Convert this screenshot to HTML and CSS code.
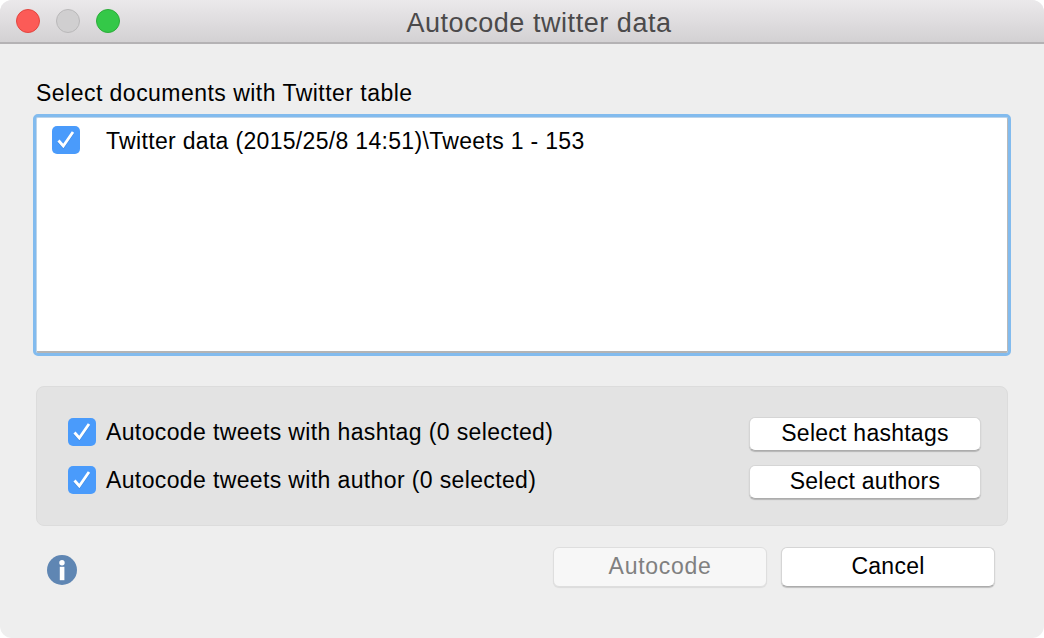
FILE: index.html
```html
<!DOCTYPE html>
<html lang="en">
<head>
<meta charset="utf-8">
<title>Autocode twitter data</title>
<link rel="stylesheet" href="styles.css">
</head>
<body>
<div class="window">
  <header class="titlebar">
    <div class="lights">
      <span class="light red"></span>
      <span class="light gray"></span>
      <span class="light green"></span>
    </div>
    <div class="title">Autocode twitter data</div>
  </header>
  <main class="content">
    <div class="list-label">Select documents with Twitter table</div>
    <div class="list">
      <div class="list-row">
        <span class="check"><svg viewBox="0 0 28 28" width="28" height="28"><path class="tick-shadow" d="M6.5 15.5 L11.3 21 L21 7"/><path class="tick" d="M6.5 14.5 L11.3 20 L21 6"/></svg></span>
        <span class="row-text">Twitter data (2015/25/8 14:51)\Tweets 1 - 153</span>
      </div>
    </div>
    <section class="options">
      <div class="option">
        <label class="option-label">
          <span class="check"><svg viewBox="0 0 28 28" width="28" height="28"><path class="tick-shadow" d="M6.5 15.5 L11.3 21 L21 7"/><path class="tick" d="M6.5 14.5 L11.3 20 L21 6"/></svg></span>
          <span>Autocode tweets with hashtag (0 selected)</span>
        </label>
        <button class="btn small">Select hashtags</button>
      </div>
      <div class="option">
        <label class="option-label">
          <span class="check"><svg viewBox="0 0 28 28" width="28" height="28"><path class="tick-shadow" d="M6.5 15.5 L11.3 21 L21 7"/><path class="tick" d="M6.5 14.5 L11.3 20 L21 6"/></svg></span>
          <span>Autocode tweets with author (0 selected)</span>
        </label>
        <button class="btn small">Select authors</button>
      </div>
    </section>
    <footer class="footer">
      <svg class="info" viewBox="0 0 30 30" width="30" height="30"><circle cx="15" cy="15" r="15" fill="#5f86b3"/><circle cx="15" cy="7.8" r="2.7" fill="#fff"/><rect x="12.8" y="11.8" width="4.6" height="13.4" fill="#fff"/></svg>
      <div class="actions">
        <button class="btn large disabled">Autocode</button>
        <button class="btn large">Cancel</button>
      </div>
    </footer>
  </main>
</div>
</body>
</html>
```
FILE: styles.css
```css
* { box-sizing: border-box; }
html, body { margin: 0; padding: 0; background: #fff; }
body {
  width: 1044px;
  height: 638px;
  overflow: hidden;
  font-family: "Liberation Sans", Arial, sans-serif;
  font-size: 23px;
  color: #000;
}
.window {
  width: 1044px;
  height: 638px;
  border-radius: 12px;
  background: #eeeeee;
  overflow: hidden;
  display: flex;
  flex-direction: column;
}
.titlebar {
  height: 44px;
  flex: none;
  display: flex;
  align-items: center;
  padding-left: 16px;
  background: linear-gradient(#ebe9eb, #d3d1d3);
  border-bottom: 2px solid #b4b2b4;
}
.lights { display: flex; gap: 16px; }
.light {
  width: 24px;
  height: 24px;
  border-radius: 50%;
  border: 1px solid transparent;
}
.red { background: #fc5b57; border-color: #e2463f; }
.gray { background: #d0cfd0; border-color: #b9b8b9; }
.green { background: #34c848; border-color: #2cac3a; }
.title {
  flex: 1;
  padding: 3px 86px 0 0;
  text-align: center;
  font-size: 27px;
  line-height: 36px;
  color: #4b4a4b;
  letter-spacing: 0.55px;
}
.content {
  flex: 1;
  padding: 35px 36px 0;
  display: flex;
  flex-direction: column;
}
.list-label { height: 26px; line-height: 28px; letter-spacing: 0.47px; }
.list {
  width: 972px;
  height: 236px;
  margin-top: 12px;
  background: #fff;
  outline: 3px solid #82bbee;
  border: 1px solid #bcd4ea;
  border-right-color: #b9b9b9;
  border-bottom: 2px solid #b4b4b4;
  border-radius: 2px;
  padding: 8px 15px;
}
.list-row { display: flex; align-items: center; gap: 26px; height: 28px; }
.row-text { letter-spacing: 0.32px; padding-top: 2px; }
.check {
  width: 28px;
  height: 28px;
  flex: none;
  border-radius: 5px;
  background: #4a9bfb;
  display: block;
}
.check svg { display: block; }
.tick { fill: none; stroke: #fff; stroke-width: 2.8; }
.tick-shadow { fill: none; stroke: #3579c9; stroke-width: 2.8; opacity: 0.5; }
.options {
  margin-top: 33px;
  height: 140px;
  width: 972px;
  background: #e3e3e3;
  border: 1px solid #dcdcdc;
  border-radius: 8px;
  padding: 30px 26px 0 31px;
  display: flex;
  flex-direction: column;
  gap: 14px;
}
.option { display: flex; align-items: center; justify-content: space-between; height: 34px; }
.option-label { display: flex; align-items: center; gap: 10px; letter-spacing: 0.37px; line-height: 24px; margin-bottom: 4px; }
.btn {
  font: inherit;
  color: #000;
  background: #fff;
  border: 1px solid #d5d5d5;
  border-bottom-color: #acacac;
  border-radius: 6px;
  box-shadow: 0 1px 1px rgba(0,0,0,.2);
  padding: 0 0 2px;
  letter-spacing: 0.25px;
}
.small { width: 232px; height: 34px; }
.large { width: 214px; height: 40px; }
.disabled { background: #f7f7f7; color: #808080; border-color: #dedede; box-shadow: 0 1px 1px rgba(0,0,0,.08); letter-spacing: 0.7px; }
.footer {
  margin-top: 21px;
  display: flex;
  align-items: center;
  justify-content: space-between;
  padding: 0 13px 0 11px;
}
.info { display: block; margin-top: 6px; }
.actions { display: flex; gap: 14px; }
```
